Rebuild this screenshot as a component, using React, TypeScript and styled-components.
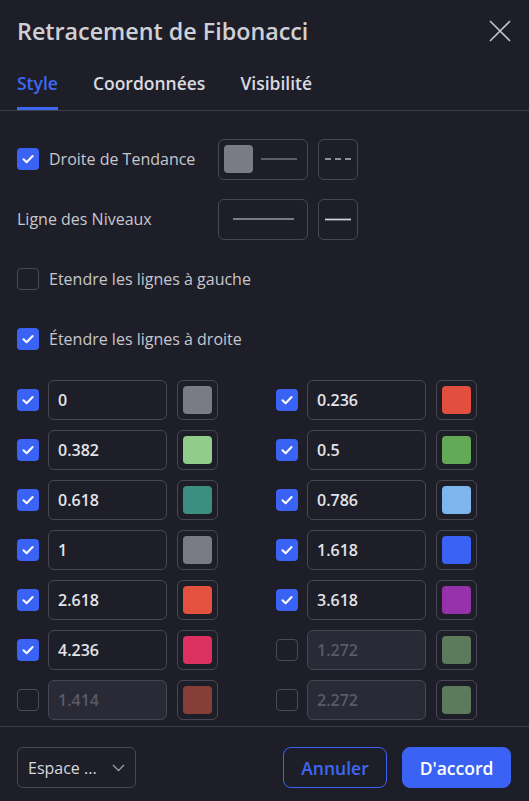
import styled, { createGlobalStyle } from "styled-components";

const GlobalStyle = createGlobalStyle`
  html, body, #root {
    margin: 0;
    height: 100%;
  }
  body {
    background: #1e1e28;
    font-family: "Open Sans", "Noto Sans", sans-serif;
    color: #d1d4dc;
  }
  * { box-sizing: border-box; }
`;

type Level = { value: string; color: string; on: boolean };

const levels: Level[] = [
  { value: "0", color: "#7b7b85", on: true },
  { value: "0.236", color: "#e34f3e", on: true },
  { value: "0.382", color: "#90cd8a", on: true },
  { value: "0.5", color: "#62aa55", on: true },
  { value: "0.618", color: "#3c8f80", on: true },
  { value: "0.786", color: "#7db5ef", on: true },
  { value: "1", color: "#7b7b85", on: true },
  { value: "1.618", color: "#3a63f5", on: true },
  { value: "2.618", color: "#e4523f", on: true },
  { value: "3.618", color: "#9431ab", on: true },
  { value: "4.236", color: "#dc3160", on: true },
  { value: "1.272", color: "#5c7b5d", on: false },
  { value: "1.414", color: "#853f37", on: false },
  { value: "2.272", color: "#5c7b5d", on: false },
];

const CheckBox = ({ on }: { on: boolean }) => (
  <Check $on={on}>
    {on && (
      <svg width="22" height="22" viewBox="0 0 22 22">
        <path
          d="M6.5 11.2 L9.6 14.2 L15.6 8"
          fill="none"
          stroke="#fff"
          strokeWidth="2"
          strokeLinecap="round"
          strokeLinejoin="round"
        />
      </svg>
    )}
  </Check>
);

export default function App() {
  return (
    <Dialog>
      <GlobalStyle />
      <Header>
        <Title>Retracement de Fibonacci</Title>
        <Close>
          <svg width="22" height="22" viewBox="0 0 22 22">
            <path d="M1 1 L21 21 M21 1 L1 21" stroke="#c4c4cc" strokeWidth="1.6" />
          </svg>
        </Close>
      </Header>
      <Tabs>
        <Tab $active>Style</Tab>
        <Tab>Coordonnées</Tab>
        <Tab>Visibilité</Tab>
      </Tabs>
      <Body>
        <Row>
          <CheckBox on />
          <Label $w={159}>Droite de Tendance</Label>
          <StyleBox $w={90} $start>
            <InnerSwatch $color="#7b7b85" />
            <svg width="36" height="2" viewBox="0 0 36 2">
              <line x1="0" y1="1" x2="36" y2="1" stroke="#9a9ba4" strokeWidth="1" />
            </svg>
          </StyleBox>
          <StyleBox $w={40}>
            <svg width="26" height="2" viewBox="0 0 26 2">
              <line x1="0" y1="1" x2="26" y2="1" stroke="#b4b5bd" strokeWidth="1.4" strokeDasharray="6 4" />
            </svg>
          </StyleBox>
        </Row>
        <Row>
          <Label $w={191}>Ligne des Niveaux</Label>
          <StyleBox $w={90}>
            <svg width="61" height="2" viewBox="0 0 61 2">
              <line x1="0" y1="1" x2="61" y2="1" stroke="#d4d5dc" strokeWidth="1.2" />
            </svg>
          </StyleBox>
          <StyleBox $w={40}>
            <svg width="26" height="3" viewBox="0 0 26 3">
              <line x1="0" y1="1.5" x2="26" y2="1.5" stroke="#d4d5dc" strokeWidth="1.7" />
            </svg>
          </StyleBox>
        </Row>
        <Row>
          <CheckBox on={false} />
          <Label>Etendre les lignes à gauche</Label>
        </Row>
        <Row>
          <CheckBox on />
          <Label>Étendre les lignes à droite</Label>
        </Row>
        <LevelGrid>
          {levels.map((l) => (
            <LevelCell key={l.value}>
              <CheckBox on={l.on} />
              <ValueInput $disabled={!l.on}>{l.value}</ValueInput>
              <SwatchBtn>
                <InnerSwatch $color={l.color} />
              </SwatchBtn>
            </LevelCell>
          ))}
        </LevelGrid>
      </Body>
      <Footer>
        <Select>
          <span>Espace ...</span>
          <svg width="13" height="8" viewBox="0 0 13 8">
            <path d="M1 1 L6.5 6.5 L12 1" fill="none" stroke="#9a9ba4" strokeWidth="1.3" />
          </svg>
        </Select>
        <Buttons>
          <Button>Annuler</Button>
          <Button $primary>D'accord</Button>
        </Buttons>
      </Footer>
    </Dialog>
  );
}

const Dialog = styled.div`
  height: 100vh;
  display: flex;
  flex-direction: column;
  background: #1e1e28;
`;

const Header = styled.div`
  height: 60px;
  flex-shrink: 0;
  display: flex;
  align-items: center;
  justify-content: space-between;
  padding: 0 18px 0 17px;
`;

const Title = styled.div`
  font-size: 23.3px;
  font-weight: 600;
  color: #cfd0d6;
  margin-top: 1px;
`;

const Close = styled.div`
  width: 22px;
  height: 22px;
  display: flex;
  margin-top: 2px;
`;

const Tabs = styled.div`
  height: 51px;
  flex-shrink: 0;
  display: flex;
  gap: 35px;
  padding: 0 17px;
  border-bottom: 1px solid #3d3e49;
`;

const Tab = styled.div<{ $active?: boolean }>`
  display: flex;
  align-items: center;
  padding-bottom: 2px;
  font-size: 17.5px;
  font-weight: 600;
  color: ${(p) => (p.$active ? "#3d68f2" : "#d9dae0")};
  border-bottom: 3px solid ${(p) => (p.$active ? "#3d68f2" : "transparent")};
`;

const Body = styled.div`
  flex: 1;
  overflow: hidden;
  padding: 28px 17px 0;
  display: flex;
  flex-direction: column;
  gap: 20px;
`;

const Row = styled.div`
  height: 40px;
  flex-shrink: 0;
  display: flex;
  align-items: center;
  gap: 10px;
`;

const Label = styled.div<{ $w?: number }>`
  font-size: 16px;
  color: #c6c7ce;
  ${(p) => (p.$w ? `width: ${p.$w}px;` : "")}
  flex-shrink: 0;
`;

const Check = styled.div<{ $on: boolean }>`
  width: 22px;
  height: 22px;
  flex-shrink: 0;
  border-radius: 4px;
  display: flex;
  background: ${(p) => (p.$on ? "#3a63f5" : "transparent")};
  border: ${(p) => (p.$on ? "none" : "1px solid #4a4b56")};
`;

const StyleBox = styled.div<{ $w: number; $start?: boolean }>`
  width: ${(p) => p.$w}px;
  height: 41px;
  flex-shrink: 0;
  border: 1px solid #464752;
  border-radius: 6px;
  display: flex;
  align-items: center;
  justify-content: ${(p) => (p.$start ? "flex-start" : "center")};
  gap: 8px;
  padding: 0 5px;
`;

const InnerSwatch = styled.div<{ $color: string }>`
  width: 29px;
  height: 28px;
  border-radius: 4px;
  flex-shrink: 0;
  background: ${(p) => p.$color};
`;

const LevelGrid = styled.div`
  display: grid;
  grid-template-columns: 201px 201px;
  column-gap: 58px;
  row-gap: 10px;
  margin-top: 1px;
`;

const LevelCell = styled.div`
  height: 40px;
  display: flex;
  align-items: center;
  gap: 10px;
`;

const ValueInput = styled.div<{ $disabled: boolean }>`
  width: 120px;
  height: 40px;
  margin-left: -1px;
  border: 1px solid #464752;
  border-radius: 6px;
  display: flex;
  align-items: center;
  padding-left: 9px;
  font-size: 16px;
  font-weight: 600;
  background: ${(p) => (p.$disabled ? "#292a35" : "transparent")};
  color: ${(p) => (p.$disabled ? "#5a5b66" : "#e3e4ea")};
`;

const SwatchBtn = styled.div`
  width: 41px;
  height: 40px;
  border: 1px solid #464752;
  border-radius: 6px;
  display: flex;
  align-items: center;
  justify-content: center;
`;

const Footer = styled.div`
  height: 75px;
  flex-shrink: 0;
  border-top: 1px solid #3d3e49;
  display: flex;
  align-items: flex-start;
  justify-content: space-between;
  padding: 20px 18px 0 17px;
`;

const Select = styled.div`
  width: 119px;
  height: 41px;
  border: 1px solid #464752;
  border-radius: 6px;
  display: flex;
  align-items: center;
  justify-content: space-between;
  padding: 0 10px 0 10px;
  font-size: 16px;
  color: #d6d7dd;
`;

const Buttons = styled.div`
  display: flex;
  gap: 15px;
`;

const Button = styled.div<{ $primary?: boolean }>`
  height: 41px;
  width: ${(p) => (p.$primary ? 109 : 104)}px;
  justify-content: center;
  border-radius: 8px;
  display: flex;
  align-items: center;
  font-size: 17.5px;
  font-weight: 600;
  border: 1px solid #3a63f5;
  background: ${(p) => (p.$primary ? "#3a63f5" : "transparent")};
  color: ${(p) => (p.$primary ? "#ffffff" : "#3d68f2")};
`;
